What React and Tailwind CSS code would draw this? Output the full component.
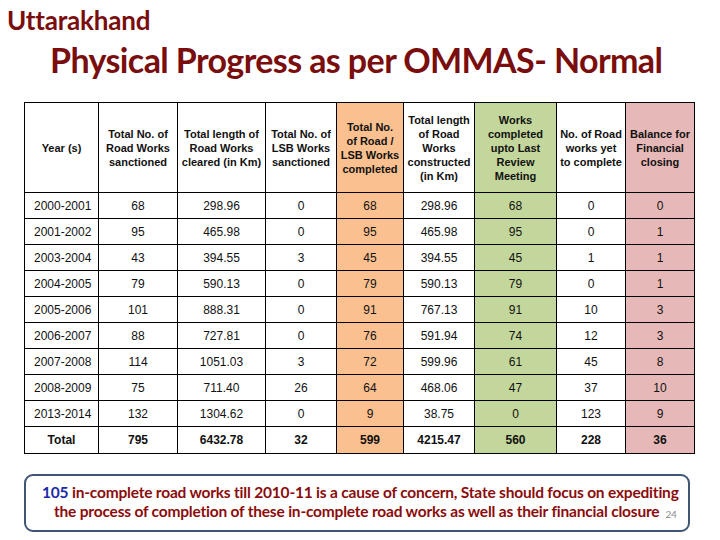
import React from 'react';

const rows = [
  ['2000-2001', '68', '298.96', '0', '68', '298.96', '68', '0', '0'],
  ['2001-2002', '95', '465.98', '0', '95', '465.98', '95', '0', '1'],
  ['2003-2004', '43', '394.55', '3', '45', '394.55', '45', '1', '1'],
  ['2004-2005', '79', '590.13', '0', '79', '590.13', '79', '0', '1'],
  ['2005-2006', '101', '888.31', '0', '91', '767.13', '91', '10', '3'],
  ['2006-2007', '88', '727.81', '0', '76', '591.94', '74', '12', '3'],
  ['2007-2008', '114', '1051.03', '3', '72', '599.96', '61', '45', '8'],
  ['2008-2009', '75', '711.40', '26', '64', '468.06', '47', '37', '10'],
  ['2013-2014', '132', '1304.62', '0', '9', '38.75', '0', '123', '9'],
];

const totals = ['Total', '795', '6432.78', '32', '599', '4215.47', '560', '228', '36'];

const widths = ['w-[74px]', 'w-[79px]', 'w-[88px]', 'w-[71px]', 'w-[67px]', 'w-[71px]', 'w-[82px]', 'w-[69px]', 'w-[69px]'];

// background per column: orange, green and pink highlights
const fills = ['', '', '', '', 'bg-[#fac090]', '', 'bg-[#c3d69b]', '', 'bg-[#e6b9b8]'];

const headers = [
  ['Year (s)'],
  ['Total No. of', 'Road Works', 'sanctioned'],
  ['Total length of', 'Road Works', 'cleared (in Km)'],
  ['Total No. of', 'LSB Works', 'sanctioned'],
  ['Total No.', 'of Road /', 'LSB Works', 'completed'],
  ['Total length', 'of Road', 'Works', 'constructed', '(in Km)'],
  ['Works', 'completed', 'upto Last', 'Review', 'Meeting'],
  ['No. of Road', 'works yet', 'to complete'],
  ['Balance for', 'Financial', 'closing'],
];

const App = () => {
  return (
    <div className="w-[720px] h-[540px] bg-white overflow-hidden relative font-['Lato',sans-serif]">
      {/* Titles */}
      <div className="pl-[7px] pt-[4px] text-[26px] leading-[32px] font-bold text-[#7a0d0d] tracking-[-0.2px]">
        Uttarakhand
      </div>
      <div className="pl-[50px] mt-[2px] text-[34px] leading-[44px] font-bold text-[#7a0d0d] tracking-[-0.6px]">
        Physical Progress as per OMMAS- Normal
      </div>

      {/* Table */}
      <table className="ml-[24px] mt-[20px] border-collapse table-fixed text-[#111] font-['Liberation_Sans',Arial,sans-serif]">
        <thead>
          <tr className="h-[90px]">
            {headers.map((h, i) => (
              <th
                key={i}
                className={`${widths[i]} ${fills[i]} border border-black p-0 text-[11px] leading-[14px] font-bold text-center align-middle whitespace-nowrap`}
              >
                {h.map((line, j) => (
                  <div key={j}>{line}</div>
                ))}
              </th>
            ))}
          </tr>
        </thead>
        <tbody>
          {rows.map((r, i) => (
            <tr key={i} className="h-[26px]">
              {r.map((c, j) => (
                <td
                  key={j}
                  className={`${fills[j]} border border-black p-0 text-[12px] text-center align-middle ${j === 0 ? 'text-left pl-[9px]' : ''}`}
                >
                  {c}
                </td>
              ))}
            </tr>
          ))}
          <tr className="h-[27px]">
            {totals.map((c, j) => (
              <td key={j} className={`${fills[j]} border border-black p-0 text-[12px] font-bold text-center align-middle`}>
                {c}
              </td>
            ))}
          </tr>
        </tbody>
      </table>

      {/* Note box */}
      <div className="mx-[24px] w-[666px] mt-[20px] h-[58px] border-2 border-[#3e5574] rounded-[9px] pt-[7px] text-[15.5px] leading-[19px] font-bold text-[#8b0c0c] tracking-[-0.2px]">
        <div className="pl-[16px]">
          <span className="text-[#1a2aa8]">105</span> in-complete road works till 2010-11 is a cause of concern, State should focus on expediting
        </div>
        <div className="pl-[28px] flex items-end">
          <span>the process of completion of these in-complete road works as well as their financial closure</span>
          <span className="ml-[6px] text-[10px] leading-[14px] font-normal text-[#8a8a8a]">24</span>
        </div>
      </div>
    </div>
  );
};

export default App;
